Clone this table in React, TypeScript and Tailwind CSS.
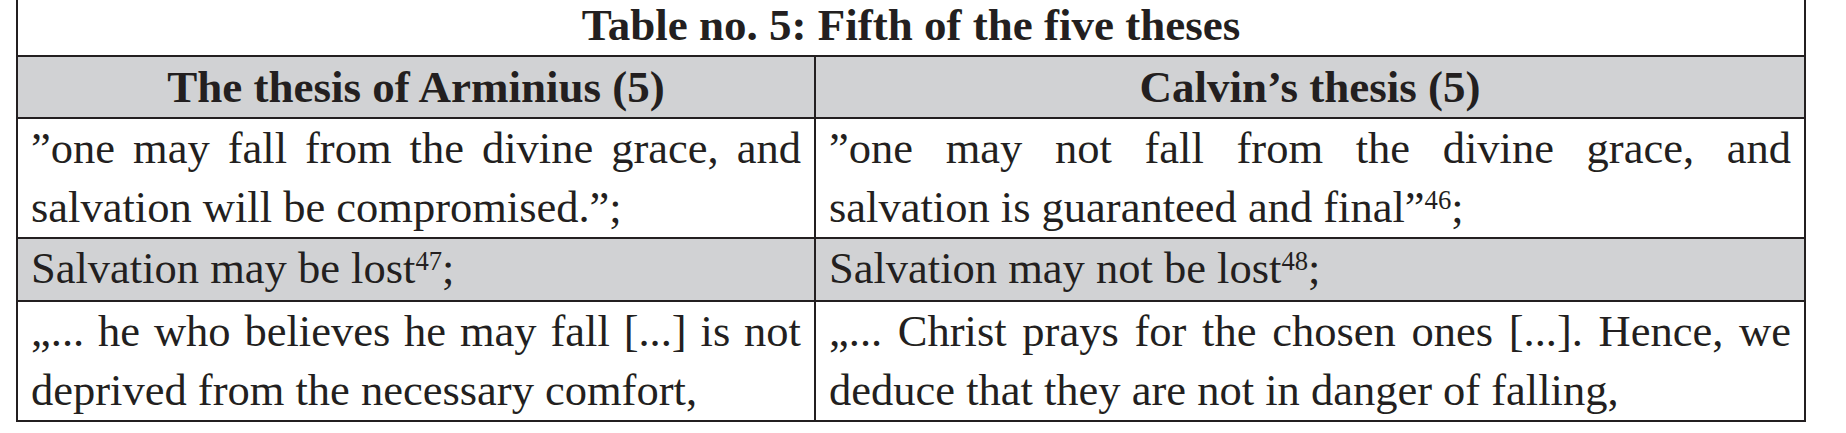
import React from "react";

type Cell = {
  lines: React.ReactNode[];
};

type Row = {
  left: Cell;
  right: Cell;
  shaded?: boolean;
};

const rows: Row[] = [
  {
    left: {
      lines: [
        "”one may fall from the divine grace, and",
        "salvation will be compromised.”;",
      ],
    },
    right: {
      lines: [
        "”one may not fall from the divine grace, and",
        <>
          salvation is guaranteed and final”<sup className="text-[0.6em] leading-none">46</sup>;
        </>,
      ],
    },
  },
  {
    shaded: true,
    left: {
      lines: [
        <>
          Salvation may be lost<sup className="text-[0.6em] leading-none">47</sup>;
        </>,
      ],
    },
    right: {
      lines: [
        <>
          Salvation may not be lost<sup className="text-[0.6em] leading-none">48</sup>;
        </>,
      ],
    },
  },
  {
    left: {
      lines: [
        "„... he who believes he may fall [...] is not",
        "deprived from the necessary comfort,",
      ],
    },
    right: {
      lines: [
        "„... Christ prays for the chosen ones [...]. Hence, we",
        "deduce that they are not in danger of falling,",
      ],
    },
  },
];

function CellLines({ cell }: { cell: Cell }) {
  return (
    <>
      {cell.lines.map((line, i) => {
        const justified = i < cell.lines.length - 1;
        return (
          <div
            key={i}
            className={
              justified
                ? "text-justify [text-align-last:justify] whitespace-nowrap"
                : "text-left whitespace-nowrap"
            }
          >
            {line}
          </div>
        );
      })}
    </>
  );
}

export default function App() {
  return (
    <div className="w-[1846px] h-[433px] overflow-hidden bg-white text-[#231f20] font-['Liberation_Serif',serif]">
      <table className="ml-[16px] -mt-[8px] w-[1788px] table-fixed border-collapse leading-[59px]">
        <colgroup>
          <col className="w-[798px]" />
          <col className="w-[990px]" />
        </colgroup>
        <thead className="text-[45px]">
          <tr>
            <th
              colSpan={2}
              className="border-[2.5px] border-[#231f20] bg-white text-center font-bold h-[61px] p-0 pt-[2px]"
            >
              Table no. 5: Fifth of the five theses
            </th>
          </tr>
          <tr>
            <th className="border-[2.5px] border-[#231f20] bg-[#d1d2d4] text-center font-bold h-[62px] p-0">
              The thesis of Arminius (5)
            </th>
            <th className="border-[2.5px] border-[#231f20] bg-[#d1d2d4] text-center font-bold h-[62px] p-0">
              Calvin’s thesis (5)
            </th>
          </tr>
        </thead>
        <tbody className="text-[44.5px]">
          {rows.map((row, i) => (
            <tr key={i} className={row.shaded ? "bg-[#d1d2d4] h-[63px]" : "bg-white"}>
              <td className="border-[2.5px] border-[#231f20] px-[13px] py-0 align-top">
                <CellLines cell={row.left} />
              </td>
              <td className="border-[2.5px] border-[#231f20] px-[13px] py-0 align-top">
                <CellLines cell={row.right} />
              </td>
            </tr>
          ))}
        </tbody>
      </table>
    </div>
  );
}
